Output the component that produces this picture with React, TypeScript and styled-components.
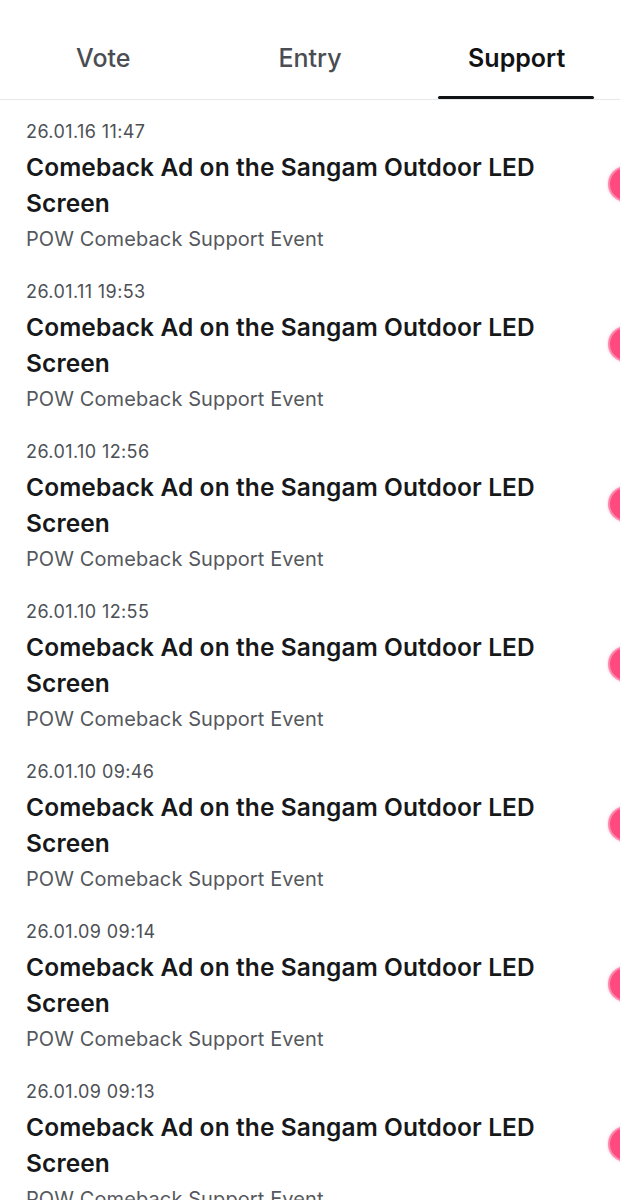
import React from 'react';
import styled, {createGlobalStyle} from "styled-components";

const GlobalStyle = createGlobalStyle`
  html, body {
    margin: 0;
    padding: 0;
    background: #FFFFFF;
    overflow-x: hidden;
  }
  body {
    font-family: 'Inter', 'Noto Sans', sans-serif;
    -webkit-font-smoothing: antialiased;
  }
`

const tabs = ['Vote', 'Entry', 'Support']

const items = [
    '26.01.16 11:47',
    '26.01.11 19:53',
    '26.01.10 12:56',
    '26.01.10 12:55',
    '26.01.10 09:46',
    '26.01.09 09:14',
    '26.01.09 09:13',
]

export default function App() {
    return (
        <StyledPage>
            <GlobalStyle/>
            <TabBar>
                {tabs.map((t, i) => (
                    <Tab key={t} active={i === 2}>
                        {t}
                    </Tab>
                ))}
            </TabBar>

            <List>
                {items.map((date, i) => (
                    <Item key={i}>
                        <TextWrapper>
                            <DateText>{date}</DateText>
                            <Title>Comeback Ad on the Sangam Outdoor LED Screen</Title>
                            <SubTitle>POW Comeback Support Event</SubTitle>
                        </TextWrapper>
                        <Dot/>
                    </Item>
                ))}
            </List>
        </StyledPage>
    );
}

const StyledPage = styled.div`
  width: 620px;
  background: #FFFFFF;
  overflow: hidden;
`

const TabBar = styled.div`
  display: grid;
  grid-template-columns: repeat(3, 1fr);
  height: 100px;
  border-bottom: 1px solid #E6E8EB;
  box-sizing: border-box;
`

const Tab = styled.div<{active?: boolean}>`
  display: flex;
  justify-content: center;
  align-items: flex-start;
  position: relative;
  padding-top: 40px;
  font-size: 25px;
  line-height: 36px;
  font-weight: ${p => p.active ? 600 : 500};
  color: ${p => p.active ? '#111214' : '#4A4D52'};

  &::after {
    content: '';
    display: ${p => p.active ? 'block' : 'none'};
    position: absolute;
    left: 25px;
    right: 26px;
    bottom: 0;
    height: 3px;
    border-radius: 2px;
    background: #111214;
  }
`

const List = styled.div`
  display: flex;
  flex-direction: column;
`

const Item = styled.div`
  display: flex;
  align-items: flex-start;
  padding: 21px 0 2px 26px;
  height: 160px;
  box-sizing: border-box;
`

const TextWrapper = styled.div`
  display: flex;
  flex-direction: column;
  width: 560px;
  flex-shrink: 0;
`

const DateText = styled.div`
  font-size: 18px;
  line-height: 22px;
  color: #4D5055;
  letter-spacing: 0.4px;
  margin-bottom: 6px;
`

const Title = styled.div`
  font-size: 24.5px;
  line-height: 36px;
  font-weight: 600;
  color: #17181A;
  letter-spacing: 0.1px;
`

const SubTitle = styled.div`
  font-size: 20px;
  line-height: 36px;
  color: #55585D;
  letter-spacing: 0.1px;
`

const Dot = styled.div`
  flex-shrink: 0;
  width: 36px;
  height: 36px;
  margin-top: 45px;
  margin-left: 22px;
  border-radius: 50%;
  box-sizing: border-box;
  background: #FE4A7E;
  border: 2px solid #F98AAE;
  box-shadow: 0 0 3px rgba(254, 74, 126, 0.35);
`
